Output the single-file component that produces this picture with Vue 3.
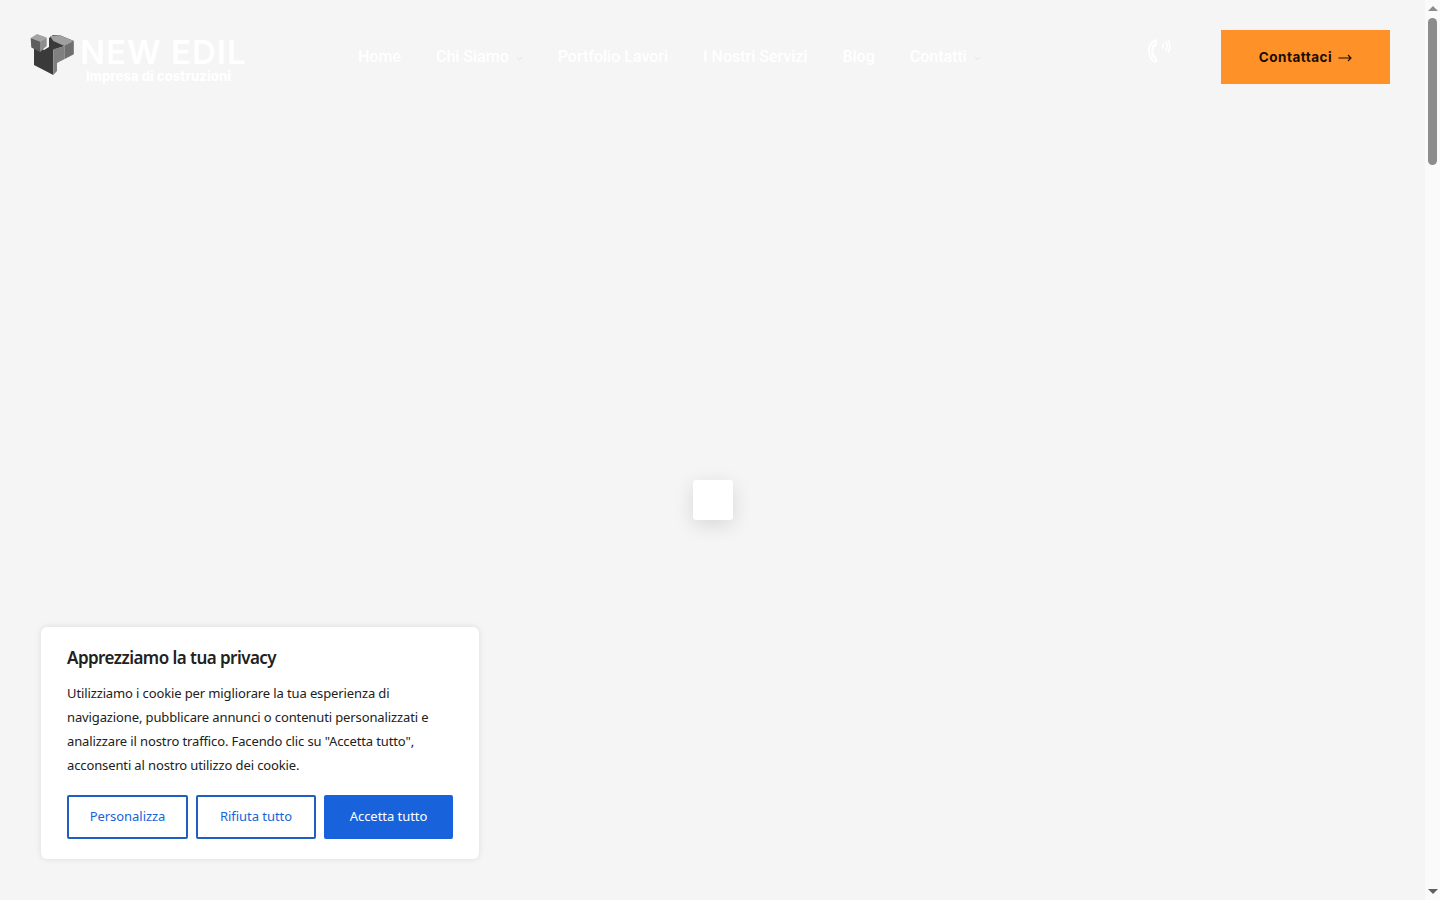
<script setup>
const menu = [
  { label: 'Home' },
  { label: 'Chi Siamo', sub: true },
  { label: 'Portfolio Lavori' },
  { label: 'I Nostri Servizi' },
  { label: 'Blog' },
  { label: 'Contatti', sub: true },
];
</script>

<template>
  <div class="page">
    <div class="main">
      <header class="header">
        <a class="logo">
          <svg class="logo-mark" width="45" height="43" viewBox="0 0 45 43">
            <polygon points="4,12 14,17 19,14 19,5 23,2 29.300,2 43.800,8 34.300,13 23.300,17 23.300,42 4,32" fill="#3a3a3a" />
            <polygon points="0.700,5 7,1 16.700,4.500 10,8.500" fill="#a3a3a3" />
            <polygon points="0.700,5 10,8.500 10,19 1.300,14.500" fill="#5e5e5e" />
            <polygon points="10,8.500 16.700,4.500 16.700,13 10,19" fill="#8e8e8e" />
            <polygon points="20,3 29.300,2 43.800,8 34.300,13 23.300,8" fill="#a0a0a0" />
            <polygon points="34.300,13 43.800,8 43.800,21.300 34.300,26.300" fill="#6f6f6f" />
            <polygon points="23.300,16.300 34.300,13 34.300,26.300 27,30 27,38 23.300,42" fill="#808080" />
          </svg>
          <span class="logo-text">
            <span class="logo-name">NEW EDIL</span>
            <span class="logo-sub">Impresa di costruzioni</span>
          </span>
        </a>
        <nav class="nav">
          <a v-for="item in menu" :key="item.label" class="nav-link">
            {{ item.label }}
            <svg v-if="item.sub" class="chev" width="7" height="5" viewBox="0 0 7 5">
              <path d="M1 1l2.500 2.500L6 1" fill="none" stroke="#e2e2e2" stroke-width="1" />
            </svg>
          </a>
        </nav>
        <svg class="phone" width="24" height="28" viewBox="0 0 24 28" fill="none" stroke="#ffffff">
          <path d="M8 3C3.500 6 1.500 10 2 15c.4 4.500 2.500 8 6 10l1.500-1.500-2-4.500-1.500.5C5 16 5 12 6.500 8.500L8 9l1.500-4.500z" stroke-width="2" />
          <path d="M15.500 6.500c1 1.500 1 3.500 0 5M18.500 4.500c2 3 2 6.500 0 9.500M21 3c2.500 4 2.500 8.500 0 12.500" stroke-width="1.500" />
        </svg>
        <button class="cta">
          <span class="cta-label">Contattaci</span>
          <svg width="14" height="10" viewBox="0 0 14 10" fill="none" stroke="#1a0d00" stroke-width="1.100">
            <path d="M0.500 5h12.500M10 2l3 3-3 3" />
          </svg>
        </button>
      </header>

      <div class="loader"></div>

      <section class="cookie">
        <h2 class="cookie-title">Apprezziamo la tua privacy</h2>
        <p class="cookie-text">
          Utilizziamo i cookie per migliorare la tua esperienza di<br />
          navigazione, pubblicare annunci o contenuti personalizzati e<br />
          analizzare il nostro traffico. Facendo clic su "Accetta tutto",<br />
          acconsenti al nostro utilizzo dei cookie.
        </p>
        <div class="cookie-actions">
          <button class="btn btn-line btn-custom">Personalizza</button>
          <button class="btn btn-line btn-reject">Rifiuta tutto</button>
          <button class="btn btn-fill">Accetta tutto</button>
        </div>
      </section>
    </div>

    <div class="scrollbar">
      <span class="arrow arrow-up"></span>
      <div class="track"><div class="thumb"></div></div>
      <span class="arrow arrow-down"></span>
    </div>
  </div>
</template>

<style>
html, body {
  margin: 0;
  overflow: hidden;
}
</style>

<style scoped>
.page {
  display: flex;
  width: 1440px;
  height: 900px;
  background: #f5f5f5;
  overflow: hidden;
}

.main {
  position: relative;
  flex: 1;
}

.header {
  display: flex;
  align-items: center;
  height: 114px;
  padding: 0 35px 0 30px;
}

.logo {
  display: flex;
  align-items: flex-start;
  width: 218px;
  height: 54px;
  margin-top: 5px;
}

.logo-mark {
  flex: none;
}

.logo-text {
  display: flex;
  flex-direction: column;
  margin-left: 5px;
  color: #fff;
  font-family: Inter, sans-serif;
}

.logo-name {
  font-size: 33px;
  font-weight: 600;
  letter-spacing: 1px;
  line-height: 39px;
  white-space: nowrap;
}

.logo-sub {
  margin-left: 6px;
  font-size: 13px;
  font-weight: 800;
  letter-spacing: 0.100px;
  line-height: 8px;
  white-space: nowrap;
}

.nav {
  display: flex;
  gap: 35px;
  margin-left: 110px;
}

.nav-link {
  display: flex;
  align-items: center;
  gap: 7px;
  color: #fff;
  font-family: Roboto, sans-serif;
  font-size: 16px;
  font-weight: 500;
  line-height: 24px;
  white-space: nowrap;
}

.chev {
  margin-top: 2px;
}

.phone {
  margin: -12px 50px 0 auto;
}

.cta {
  display: flex;
  align-items: center;
  justify-content: center;
  gap: 6px;
  width: 169px;
  height: 54px;
  border: 0;
  padding: 0;
  background: #ff9129;
  color: #1a0d00;
  font-family: Inter, sans-serif;
  font-size: 13.500px;
  font-weight: 700;
}

.cta-label {
  letter-spacing: 0.500px;
}

.cta svg {
  margin-top: 2px;
}

.loader {
  position: absolute;
  left: 693px;
  top: 480px;
  width: 40px;
  height: 40px;
  border-radius: 3px;
  background: #fff;
  box-shadow: 0 5px 20px rgba(0, 0, 0, 0.12);
}

.cookie {
  position: absolute;
  left: 41px;
  top: 627px;
  box-sizing: border-box;
  width: 438px;
  height: 232px;
  padding: 20px 26px;
  border-radius: 6px;
  background: #fff;
  box-shadow: 0 0 6px rgba(0, 0, 0, 0.1);
  font-family: "Noto Sans", sans-serif;
}

.cookie-title {
  margin: 0 0 12px;
  color: #212121;
  font-size: 17px;
  font-weight: 600;
  letter-spacing: -0.540px;
  line-height: 22px;
}

.cookie-text {
  margin: 0 0 18px;
  color: #212121;
  font-size: 13px;
  letter-spacing: -0.120px;
  line-height: 24px;
  white-space: nowrap;
}

.cookie-actions {
  display: flex;
  gap: 8px;
}

.btn {
  height: 44px;
  box-sizing: border-box;
  border-radius: 2px;
  font-family: "Noto Sans", sans-serif;
  font-size: 13px;
  letter-spacing: -0.050px;
  padding: 0 0 3px;
}

.btn-line {
  border: 2px solid #1f5fbf;
  background: #fff;
  color: #1863dc;
}

.btn-custom {
  width: 121px;
}

.btn-reject {
  width: 120px;
}

.btn-fill {
  width: 129px;
  border: 2px solid #1863dc;
  background: #1863dc;
  color: #fff;
}

.scrollbar {
  display: flex;
  flex: none;
  flex-direction: column;
  align-items: center;
  width: 15px;
  height: 900px;
  background: #fafafa;
}

.track {
  flex: 1;
  width: 100%;
}

.thumb {
  width: 9px;
  height: 147px;
  margin: 1px auto 0;
  border-radius: 5px;
  background: #8c8c8c;
}

.arrow {
  flex: none;
  width: 0;
  height: 0;
  margin: 6px 0;
  border-left: 5px solid transparent;
  border-right: 5px solid transparent;
}

.arrow-up {
  border-bottom: 5px solid #8c8c8c;
}

.arrow-down {
  border-top: 5px solid #5f5f5f;
}
</style>
